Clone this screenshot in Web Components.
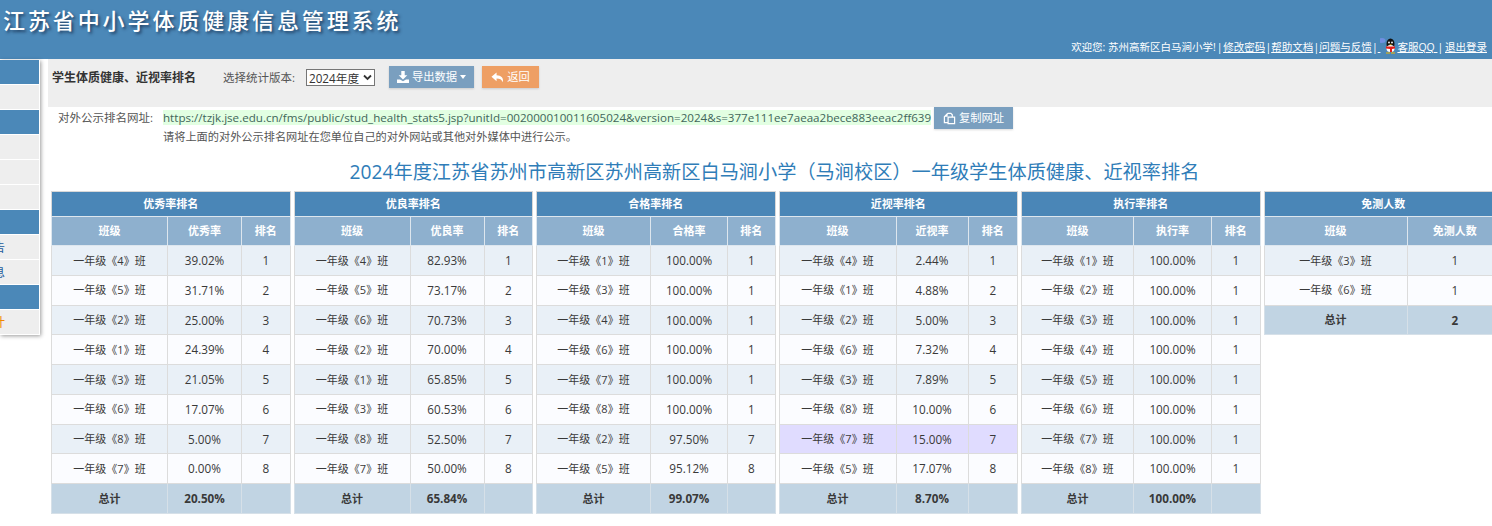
<!DOCTYPE html>
<html lang="zh">
<head>
<meta charset="utf-8">
<title>江苏省中小学体质健康信息管理系统</title>
<style>
  html, body { margin: 0; height: 100%; overflow: hidden; background: #fff; }
  body {
    font: 11.7px/1.5 "Open Sans", "Noto Sans CJK SC", sans-serif;
    color: #393939;
  }
  #shell { display: flex; align-items: flex-start; }
  #content { flex: 1 1 0; min-width: 0; }
  #tables { display: flex; gap: 4px; padding-left: 51px; margin-left: -48px; width: 1600px; }
</style>
</head>
<body>
<app-header></app-header>
<div id="shell">
  <side-menu></side-menu>
  <div id="content">
    <tool-bar></tool-bar>
    <public-url></public-url>
    <page-title>2024年度江苏省苏州市高新区苏州高新区白马涧小学（马涧校区）一年级学生体质健康、近视率排名</page-title>
    <div id="tables"></div>
  </div>
</div>

<script>
const icons = {
  download: `<svg viewBox="0 0 14 14" width="12" height="12"><path fill="currentColor" d="M5 0h4v5h3L7 10 2 5h3zM0 10h3.500L7 12l3.500-2H14v4H0z"/></svg>`,
  reply: `<svg viewBox="0 0 14 14" width="13" height="13"><path fill="currentColor" d="M6 1.500 .5 6.200 6 11V8c3.400 0 5.600.9 6.600 4.200C14 7.500 11 4.800 6 4.500z"/></svg>`,
  copy: `<svg viewBox="0 0 14 14" width="13" height="13"><path fill="none" stroke="currentColor" stroke-width="1.300" d="M5 1.500h3.500L10 3v2M5 1.500 1.500 5v6.500h3.500M5.500 5.500h7v7h-7z"/><path fill="currentColor" d="M1.500 5 5 1.500V5z"/></svg>`
};

class AppHeader extends HTMLElement {
  constructor() {
    super();
    this.attachShadow({ mode: 'open' }).innerHTML = `
<style>
  :host {
    display: flex; flex-direction: column; justify-content: space-between;
    height: 59px; background: #4b88b8; color: #fff;
    box-sizing: border-box; padding: 5px 5px 4px 3px;
  }
  h1 {
    margin: 0; font-size: 22px; line-height: 30px; font-weight: 500;
    letter-spacing: 2.900px; text-shadow: 2px 2px 3px rgba(20, 40, 70, .7);
  }
  .links { align-self: flex-end; font-size: 10.500px; line-height: 16px; white-space: nowrap; display: flex; align-items: flex-end; }
  a { color: #fff; text-decoration: underline; }
  i { font-style: normal; }
  .wide { margin: 0 -2px; }
  .near { margin-left: -2.500px; }
  .tail { margin-right: -1px; }
  svg { display: block; margin-bottom: 1px; }
</style>
<h1>江苏省中小学体质健康信息管理系统</h1>
<div class="links">
  <span>欢迎您: 苏州高新区白马涧小学! <i class="wide">|</i> <a>修改密码</a> <i class="near">|</i><a>帮助文档</a> <i class="near">|</i><a>问题与反馈</a> <i class="near">|</i><a>&nbsp;</a></span>
  <svg width="17" height="17" viewBox="2 0 17 17">
    <ellipse cx="4" cy="3.500" rx="3.500" ry="2.500" fill="#6f8fe0"/>
    <ellipse cx="12.500" cy="7" rx="4" ry="5.500" fill="#111"/>
    <ellipse cx="12.500" cy="11.500" rx="4" ry="3.500" fill="#fff"/>
    <path d="M8 9.500h9v2l-3 .5v3h-2v-3l-4-.5z" fill="#e0201c"/>
    <path d="M8 15.500h4v1H8zM13 15.500h4v1h-4z" fill="#f2b500"/>
    <circle cx="11" cy="5.500" r=".9" fill="#fff"/><circle cx="14" cy="5.500" r=".9" fill="#fff"/>
    <path d="M11 7.200h3l-1.500 1z" fill="#f2b500"/>
  </svg>
  <span><a>客服QQ </a><i class="tail">|</i> <a>退出登录</a></span>
</div>`;
  }
}
customElements.define('app-header', AppHeader);

class SideMenu extends HTMLElement {
  constructor() {
    super();
    let rows = [
      ['head', ''], ['item', ''], ['head', ''], ['item', ''], ['item', ''], ['item', ''],
      ['head', ''], ['item', '体质报告'], ['item', '学校信息'], ['head', ''], ['item on', '排名统计']
    ];
    this.attachShadow({ mode: 'open' }).innerHTML = `
<style>
  :host {
    display: block; flex: none; width: 40px; margin: 1px 8px 0 0; box-sizing: border-box;
    background: #fff; border-right: 1px solid #fff; overflow: hidden;
    box-shadow: 1px 1px 4px rgba(0, 0, 0, .4);
  }
  div {
    height: 24px; line-height: 26px; margin-bottom: 1px; background: #eee; font-size: 12px;
    display: flex; justify-content: flex-end; white-space: nowrap; padding-right: 34px;
    color: #1c5c9c;
  }
  .head { background: #4b88b8; }
  .on { color: #f08a00; }
</style>
${rows.map(r => `<div class="${r[0]}">${r[1]}</div>`).join('')}`;
  }
}
customElements.define('side-menu', SideMenu);

class ActionButton extends HTMLElement {
  constructor() {
    super();
    this.attachShadow({ mode: 'open' }).innerHTML = `
<style>
  :host {
    display: inline-flex; align-items: center; justify-content: center; gap: 3px;
    height: 22px; box-sizing: border-box; background: #7a9fbf; color: #fff;
    font-size: 11.300px; cursor: pointer; box-shadow: 0 1px 2px rgba(0, 0, 0, .15);
  }
  :host([tone="orange"]) { background: #ee9f64; }
  svg { display: block; }
  .caret { border-top: 4px solid #fff; border-left: 3px solid transparent; border-right: 3px solid transparent; }
</style>
<span id="icon"></span><slot></slot>`;
  }
  connectedCallback() {
    let span = this.shadowRoot.getElementById('icon');
    span.innerHTML = icons[this.getAttribute('icon')] || '';
    if (this.hasAttribute('caret')) {
      let c = document.createElement('i');
      c.className = 'caret';
      this.shadowRoot.appendChild(c);
    }
  }
}
customElements.define('action-button', ActionButton);

class ToolBar extends HTMLElement {
  constructor() {
    super();
    this.attachShadow({ mode: 'open' }).innerHTML = `
<style>
  :host {
    display: flex; align-items: flex-start; height: 48px; box-sizing: border-box;
    background: #eee; padding: 7px 0 0 4px;
  }
  b { line-height: 23px; font-size: 12px; width: 171px; flex: none; color: #333; }
  label { line-height: 23px; color: #555; width: 83px; flex: none; font-size: 11.500px; white-space: nowrap; }
  .pick { position: relative; flex: none; width: 69px; height: 17px; margin: 3px 14px 0 0; }
  select {
    appearance: none; display: block; width: 100%; height: 100%; margin: 0; padding: 0 0 0 2px;
    font: 11.700px "Open Sans", "Noto Sans CJK SC", sans-serif; color: #333;
    background: #fff; border: 1px solid #767676; border-radius: 0; box-sizing: border-box;
  }
  svg { position: absolute; right: 3px; top: 5px; pointer-events: none; }
  .export { width: 85px; margin-right: 8px; }
  .back { width: 57px; }
</style>
<b>学生体质健康、近视率排名</b>
<label>选择统计版本:</label>
<span class="pick">
  <select><option>2024年度</option></select>
  <svg width="9" height="7" viewBox="0 0 9 7"><path d="M1 1.500 4.500 5 8 1.500" fill="none" stroke="#333" stroke-width="1.800"/></svg>
</span>
<action-button class="export" icon="download" caret>导出数据</action-button>
<action-button class="back" tone="orange" icon="reply">返回</action-button>`;
  }
}
customElements.define('tool-bar', ToolBar);

class PublicUrl extends HTMLElement {
  constructor() {
    super();
    this.attachShadow({ mode: 'open' }).innerHTML = `
<style>
  :host {
    display: grid; grid-template-columns: 105px auto 1fr; column-gap: 0;
    font-size: 11.200px; padding-left: 10px; color: #555;
  }
  .lab { line-height: 22px; white-space: nowrap; font-size: 11.500px; }
  .url {
    align-self: start; margin-top: 3px; line-height: 15px; height: 15px; background: #e2ffe2;
    color: #41665a; white-space: nowrap; font-size: 11.600px;
  }
  action-button { width: 79px; margin-left: 3px; justify-self: start; }
  .note { grid-column: 2 / 4; line-height: 16px; margin-top: 0; color: #555; }
</style>
<div class="lab">对外公示排名网址:</div>
<div class="url">https://tzjk.jse.edu.cn/fms/public/stud_health_stats5.jsp?unitId=002000010011605024&amp;version=2024&amp;s=377e111ee7aeaa2bece883eeac2ff639</div>
<action-button icon="copy">复制网址</action-button>
<div class="note">请将上面的对外公示排名网址在您单位自己的对外网站或其他对外媒体中进行公示。</div>`;
  }
}
customElements.define('public-url', PublicUrl);

class PageTitle extends HTMLElement {
  constructor() {
    super();
    this.attachShadow({ mode: 'open' }).innerHTML = `
<style>
  :host {
    display: block; margin-top: 12px; height: 34px; line-height: 29px; box-sizing: border-box;
    font-size: 19.200px; color: #2f7db8; text-align: center; white-space: nowrap;
    margin-left: -48px; width: 1549px;
  }
</style>
<slot></slot>`;
  }
}
customElements.define('page-title', PageTitle);

class RankTable extends HTMLElement {
  constructor() {
    super();
    this.attachShadow({ mode: 'open' });
  }
  set data(d) {
    let widths = d.widths.map(w => `<col style="width:${w}px">`).join('');
    let heads = d.heads.map(h => `<th>${h}</th>`).join('');
    let body = d.rows.map(r => {
      let mark = r.mark ? ' class="mark"' : '';
      return `<tr${mark}>${r.cells.map(c => `<td>${c}</td>`).join('')}</tr>`;
    }).join('');
    let foot = d.foot.map(c => `<td>${c}</td>`).join('');
    this.shadowRoot.innerHTML = `
<style>
  :host { display: block; flex: none; width: 238.500px; }
  table {
    width: 100%; table-layout: fixed; border-collapse: collapse;
    border: 1px solid #d8d8d8; font-size: 11.700px; color: #393939;
  }
  th, td { padding: 0; text-align: center; font-weight: normal; box-sizing: border-box; }
  th { font-size: 11px; }
  td { padding-top: 1px; }
  td:first-child { font-size: 11px; }
  .title th {
    height: 25px; background: #4a86b7; color: #fff; font-weight: bold;
    border: 1px solid #d8d8d8; border-bottom-color: #dde6ee;
  }
  .head th {
    height: 29px; background: #8eb0ce; color: #fff; font-weight: bold;
    border: 1px solid #dde6ee; border-top: 0; border-bottom: 1px solid #dde6ee;
  }
  td { height: 29.750px; border: 1px solid #dcdcdc; }
  tbody tr:nth-child(odd) { background: #e9f0f7; }
  tbody tr:nth-child(even) { background: #fbfcff; }
  tbody tr.mark { background: #e0dcff; }
  tfoot td { background: #c1d4e3; font-weight: bold; border-color: #d6e0e8; }
</style>
<table>
  <colgroup>${widths}</colgroup>
  <thead>
    <tr class="title"><th colspan="${d.heads.length}">${d.title}</th></tr>
    <tr class="head">${heads}</tr>
  </thead>
  <tbody>${body}</tbody>
  <tfoot><tr>${foot}</tr></tfoot>
</table>`;
  }
}
customElements.define('rank-table', RankTable);

function rankRows(list) {
  return list.map(r => ({ cells: [`一年级《${r[0]}》班`, r[1], r[2]], mark: r[3] }));
}

const tables = [
  { title: '优秀率排名', heads: ['班级', '优秀率', '排名'], widths: [116, 74, 48.500],
    rows: rankRows([[4, '39.02%', 1], [5, '31.71%', 2], [2, '25.00%', 3], [1, '24.39%', 4], [3, '21.05%', 5], [6, '17.07%', 6], [8, '5.00%', 7], [7, '0.00%', 8]]),
    foot: ['总计', '20.50%', ''] },
  { title: '优良率排名', heads: ['班级', '优良率', '排名'], widths: [116, 74, 48.500],
    rows: rankRows([[4, '82.93%', 1], [5, '73.17%', 2], [6, '70.73%', 3], [2, '70.00%', 4], [1, '65.85%', 5], [3, '60.53%', 6], [8, '52.50%', 7], [7, '50.00%', 8]]),
    foot: ['总计', '65.84%', ''] },
  { title: '合格率排名', heads: ['班级', '合格率', '排名'], widths: [114, 77, 47.500],
    rows: rankRows([[1, '100.00%', 1], [3, '100.00%', 1], [4, '100.00%', 1], [6, '100.00%', 1], [7, '100.00%', 1], [8, '100.00%', 1], [2, '97.50%', 7], [5, '95.12%', 8]]),
    foot: ['总计', '99.07%', ''] },
  { title: '近视率排名', heads: ['班级', '近视率', '排名'], widths: [117, 72, 49.500],
    rows: rankRows([[4, '2.44%', 1], [1, '4.88%', 2], [2, '5.00%', 3], [6, '7.32%', 4], [3, '7.89%', 5], [8, '10.00%', 6], [7, '15.00%', 7, true], [5, '17.07%', 8]]),
    foot: ['总计', '8.70%', ''] },
  { title: '执行率排名', heads: ['班级', '执行率', '排名'], widths: [112, 78, 48.500],
    rows: rankRows([[1, '100.00%', 1], [2, '100.00%', 1], [3, '100.00%', 1], [4, '100.00%', 1], [5, '100.00%', 1], [6, '100.00%', 1], [7, '100.00%', 1], [8, '100.00%', 1]]),
    foot: ['总计', '100.00%', ''] },
  { title: '免测人数', heads: ['班级', '免测人数'], widths: [143, 95.500],
    rows: [{ cells: ['一年级《3》班', 1] }, { cells: ['一年级《6》班', 1] }],
    foot: ['总计', '2'] }
];

const holder = document.getElementById('tables');
tables.forEach(t => {
  let el = document.createElement('rank-table');
  el.data = t;
  holder.appendChild(el);
});
</script>
</body>
</html>
